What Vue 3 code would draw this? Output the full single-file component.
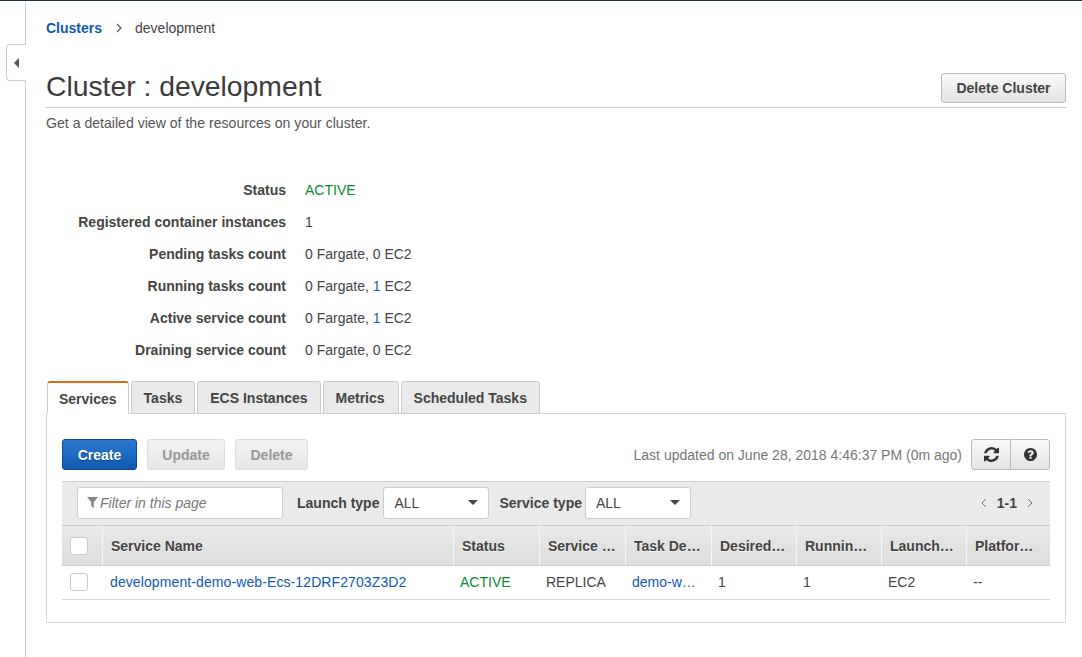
<template>
  <div class="page">
    <aside class="side">
      <button class="side-toggle"><span class="tri"></span></button>
    </aside>
    <main class="main">
      <div class="crumbs">
        <a class="crumb-link">Clusters</a>
        <svg class="crumb-sep" width="6" height="10" viewBox="0 0 6 10"><path d="M1 1l4 4-4 4" fill="none" stroke="#555" stroke-width="1.1" /></svg>
        <span>development</span>
      </div>
      <div class="head">
        <h1>Cluster : development</h1>
        <button class="btn btn-delete">Delete Cluster</button>
      </div>
      <p class="desc">Get a detailed view of the resources on your cluster.</p>

      <dl class="details">
        <template v-for="d in details" :key="d.label">
          <dt>{{ d.label }}</dt>
          <dd>
            <span v-if="d.active" class="green">{{ d.active }}</span>
            <template v-else-if="d.ec2 !== undefined">0 Fargate, <a v-if="d.ec2" class="link">{{ d.ec2 }}</a><template v-else>0</template> EC2</template>
            <template v-else>{{ d.value }}</template>
          </dd>
        </template>
      </dl>

      <div class="tabs">
        <div v-for="(t, i) in tabs" :key="t" class="tab" :class="{ on: i === 0 }">{{ t }}</div>
      </div>

      <section class="panel">
        <div class="toolbar">
          <button class="btn btn-primary">Create</button>
          <button class="btn btn-off">Update</button>
          <button class="btn btn-off btn-del">Delete</button>
          <span class="updated">Last updated on June 28, 2018 4:46:37 PM (0m ago)</span>
          <div class="btn-group">
            <button class="btn icon-btn">
              <svg width="15" height="15" viewBox="0 0 1536 1536"><path fill="#333" d="M1511 928q0 5-1 7-64 268-268 434.5t-478 166.5q-146 0-282.5-55t-243.5-157l-129 129q-19 19-45 19t-45-19-19-45v-448q0-26 19-45t45-19h448q26 0 45 19t19 45-19 45l-137 137q71 66 161 102t187 36q134 0 250-65t186-179q11-17 53-117 8-23 30-23h192q13 0 22.5 9.5t9.5 22.5zm25-800v448q0 26-19 45t-45 19h-448q-26 0-45-19t-19-45 19-45l138-138q-148-137-349-137-134 0-250 65t-186 179q-11 17-53 117-8 23-30 23h-199q-13 0-22.5-9.5t-9.5-22.5v-7q65-268 270-434.5t480-166.5q146 0 284 55.5t245 156.5l130-129q19-19 45-19t45 19 19 45z" /></svg>
            </button>
            <button class="btn icon-btn">
              <svg width="13" height="13" viewBox="0 0 1536 1536"><path fill="#333" d="M896 1248v-192q0-14-9-23t-23-9h-192q-14 0-23 9t-9 23v192q0 14 9 23t23 9h192q14 0 23-9t9-23zm256-672q0-88-55.5-163t-138.5-116-170-41q-243 0-371 213-15 24 8 42l132 100q7 6 19 6 16 0 25-12 53-68 86-92 34-24 86-24 48 0 85.5 26t37.5 59q0 38-20 61t-68 45q-63 28-115.5 86.5t-52.5 125.5v36q0 14 9 23t23 9h192q14 0 23-9t9-23q0-19 21.5-49.5t54.5-49.5q32-18 49-28.5t46-35 44.5-48 28-60.5 12.5-81zm384 192q0 209-103 385.5t-279.5 279.5-385.5 103-385.5-103-279.5-279.5-103-385.5 103-385.5 279.5-279.5 385.5-103 385.5 103 279.5 279.5 103 385.5z" /></svg>
            </button>
          </div>
        </div>

        <div class="filters">
          <div class="filter-box">
            <svg width="11" height="11" viewBox="0 0 11 11"><path d="M0 0h11L6.8 5.2V11L4.2 9V5.2z" fill="#888" /></svg>
            <span>Filter in this page</span>
          </div>
          <label class="filter-label">Launch type</label>
          <div class="select"><span>ALL</span><i class="caret"></i></div>
          <label class="filter-label">Service type</label>
          <div class="select"><span>ALL</span><i class="caret"></i></div>
          <div class="pager">
            <svg width="6" height="10" viewBox="0 0 6 10"><path d="M5 1L1 5l4 4" fill="none" stroke="#777" /></svg>
            <b>1-1</b>
            <svg width="6" height="10" viewBox="0 0 6 10"><path d="M1 1l4 4-4 4" fill="none" stroke="#777" /></svg>
          </div>
        </div>

        <div class="table">
          <div class="cell hcell chk"><i class="box"></i></div>
          <div v-for="h in headers" :key="h" class="cell hcell"><span class="clip">{{ h }}</span></div>

          <div class="cell chk row-chk"><i class="box"></i></div>
          <div class="cell body first"><a class="link service-link">development-demo-web-Ecs-12DRF2703Z3D2</a></div>
          <div class="cell body status"><span class="green">ACTIVE</span></div>
          <div class="cell body">REPLICA</div>
          <div class="cell body task"><a class="link clip">demo-web:3</a></div>
          <div class="cell body">1</div>
          <div class="cell body">1</div>
          <div class="cell body">EC2</div>
          <div class="cell body">--</div>
        </div>
      </section>
    </main>
  </div>
</template>

<script setup>
const details = [
  { label: 'Status', active: 'ACTIVE' },
  { label: 'Registered container instances', value: '1' },
  { label: 'Pending tasks count', ec2: 0 },
  { label: 'Running tasks count', ec2: 1 },
  { label: 'Active service count', ec2: 1 },
  { label: 'Draining service count', ec2: 0 },
];

const tabs = ['Services', 'Tasks', 'ECS Instances', 'Metrics', 'Scheduled Tasks'];

const headers = [
  'Service Name',
  'Status',
  'Service type',
  'Task Definition',
  'Desired tasks',
  'Running tasks',
  'Launch type',
  'Platform version',
];
</script>

<style>
html, body {
  background: #fff;
}
</style>

<style scoped>
.page {
  display: flex;
  height: 657px;
  box-sizing: border-box;
  overflow: hidden;
  border-top: 1px solid #232f3e;
  font-family: "Liberation Sans", Arial, sans-serif;
  font-size: 14px;
  color: #444;
  background: #fff;
}

.side {
  position: relative;
  flex: 0 0 25px;
  width: 25px;
  border-right: 1px solid #ccc;
}

.side-toggle {
  position: absolute;
  top: 43px;
  left: 6px;
  width: 20px;
  height: 37px;
  box-sizing: border-box;
  padding: 0 1px 0 0;
  display: flex;
  align-items: center;
  justify-content: center;
  background: #fff;
  border: 1px solid #ccc;
  border-right: 0;
  border-radius: 4px 0 0 4px;
}

.tri {
  width: 0;
  height: 0;
  border-top: 5px solid transparent;
  border-bottom: 5px solid transparent;
  border-right: 5px solid #555;
}

.main {
  flex: 1;
  padding: 0 16px 0 20px;
  min-width: 0;
}

.crumbs {
  display: flex;
  align-items: center;
  height: 54px;
  line-height: 54px;
  color: #444;
}

.crumb-link {
  color: #0f5ab0;
  font-weight: 700;
}

.crumb-sep {
  margin: 0 13px 0 14px;
}

.head {
  display: flex;
  justify-content: space-between;
  align-items: flex-end;
  height: 52px;
  border-bottom: 1px solid #ccc;
}

h1 {
  margin: 0;
  font-size: 28.3px;
  font-weight: 400;
  line-height: 34px;
  color: #3b3b3b;
  padding-bottom: 4px;
}

.btn {
  box-sizing: border-box;
  height: 31px;
  padding: 0 14px;
  border: 1px solid #bbb;
  border-radius: 3px;
  font: 700 14px "Liberation Sans", Arial, sans-serif;
  color: #444;
  background: linear-gradient(#f9f9f9, #e3e3e3);
}

.btn-delete {
  width: 125px;
  height: 30px;
  margin-bottom: 4px;
}

.desc {
  margin: 0;
  padding-top: 7px;
  line-height: 16px;
  font-size: 14.1px;
  color: #555;
}

.details {
  display: grid;
  grid-template-columns: 240px 1fr;
  column-gap: 19px;
  margin: 43px 0 0;
  grid-auto-rows: 32px;
  align-items: center;
  line-height: 32px;
}

.details dt {
  text-align: right;
  font-weight: 700;
  color: #444;
}

.details dd {
  margin: 0;
  color: #444;
}

.green {
  color: #0a8a30;
}

.link {
  color: #0f5ab0;
}

.service-link {
  letter-spacing: 0.1px;
}

.tabs {
  display: flex;
  gap: 2px;
  margin-top: 15px;
  padding-left: 1px;
  height: 32px;
  position: relative;
  z-index: 1;
}

.tab {
  box-sizing: border-box;
  height: 33px;
  line-height: 32px;
  padding: 0 12px;
  background: #eaeaea;
  border: 1px solid #ccc;
  border-radius: 3px 3px 0 0;
  font-weight: 700;
  color: #444;
}

.tab:nth-child(4) {
  padding-right: 13px;
}

.tab.on {
  padding: 0 11px;
  background: #fff;
  border-top: 2px solid #dd6b10;
  border-bottom-color: #fff;
}

.panel {
  box-sizing: border-box;
  height: 210px;
  padding: 25px 15px 0;
  border: 1px solid #d5d5d5;
  background: #fff;
}

.toolbar {
  display: flex;
  align-items: center;
  height: 31px;
}

.btn-primary {
  width: 75px;
  padding: 0;
  margin-right: 10px;
  color: #fff;
  background: linear-gradient(#2d7ad0, #0f5ab0);
  border-color: #0c4a92;
  text-shadow: 0 1px 1px rgba(0, 0, 0, 0.4);
}

.btn-off {
  width: 78px;
  padding: 0;
  margin-right: 10px;
  color: #999;
  background: linear-gradient(#f3f3f3, #e6e6e6);
  border-color: #ddd;
}

.btn-del {
  width: 73px;
}

.updated {
  margin-left: auto;
  margin-right: 9px;
  color: #777;
}

.btn-group {
  display: flex;
}

.icon-btn {
  display: flex;
  align-items: center;
  justify-content: center;
  width: 40px;
  padding: 0;
  border-radius: 0 3px 3px 0;
  margin-left: -1px;
}

.icon-btn:first-child {
  border-radius: 3px 0 0 3px;
  margin-left: 0;
}

.filters {
  display: flex;
  align-items: center;
  height: 44px;
  margin-top: 11px;
  box-sizing: border-box;
  padding: 0 15px 2px;
  background: #eaeaea;
  border-top: 1px solid #ccc;
}

.filter-box {
  display: flex;
  align-items: center;
  gap: 2px;
  box-sizing: border-box;
  width: 206px;
  height: 32px;
  padding-left: 9px;
  background: #fff;
  border: 1px solid #ccc;
  border-radius: 3px;
  font-style: italic;
  color: #777;
}

.filter-label {
  margin: 0 4px 0 14px;
  font-weight: 700;
  color: #444;
}

.select + .filter-label {
  margin: 0 3px 0 10px;
}

.select {
  display: flex;
  align-items: center;
  justify-content: space-between;
  box-sizing: border-box;
  width: 106px;
  height: 32px;
  padding: 0 10px;
  background: #fff;
  border: 1px solid #ccc;
  border-radius: 3px;
}

.caret {
  width: 0;
  height: 0;
  border-left: 5px solid transparent;
  border-right: 5px solid transparent;
  border-top: 5px solid #444;
}

.pager {
  display: flex;
  align-items: center;
  gap: 10px;
  margin-left: auto;
  margin-right: 2px;
  color: #444;
}

.table {
  display: grid;
  grid-template-columns: 40px 351px 86px 86px 86px 85px 85px 85px 1fr;
  grid-template-rows: 41px 34px;
}

.cell {
  display: flex;
  align-items: center;
  box-sizing: border-box;
  min-width: 0;
  border-bottom: 1px solid #d5d5d5;
}

.hcell {
  padding: 0 7px 0 8px;
  font-weight: 700;
  color: #444;
  background: linear-gradient(#e9e9e9, #dcdcdc);
  border-top: 1px solid #ccc;
  border-left: 1px solid #f4f4f4;
  border-bottom: 1px solid #ccc;
  text-shadow: 0 1px 0 rgba(255, 255, 255, 0.6);
}

.hcell:nth-child(8) {
  padding-right: 10px;
}

.chk {
  padding-left: 8px;
  border-left: 0;
}

.row-chk {
  padding-bottom: 2px;
}

.box {
  display: block;
  box-sizing: border-box;
  width: 18px;
  height: 18px;
  background: #fff;
  border: 1px solid #ccc;
  border-radius: 3px;
}

.clip {
  display: block;
  overflow: hidden;
  white-space: nowrap;
  text-overflow: ellipsis;
  min-width: 0;
}

.body {
  padding-left: 7px;
  padding-bottom: 2px;
}

.first {
  padding-left: 8px;
}

.task {
  padding-right: 12px;
}
</style>
